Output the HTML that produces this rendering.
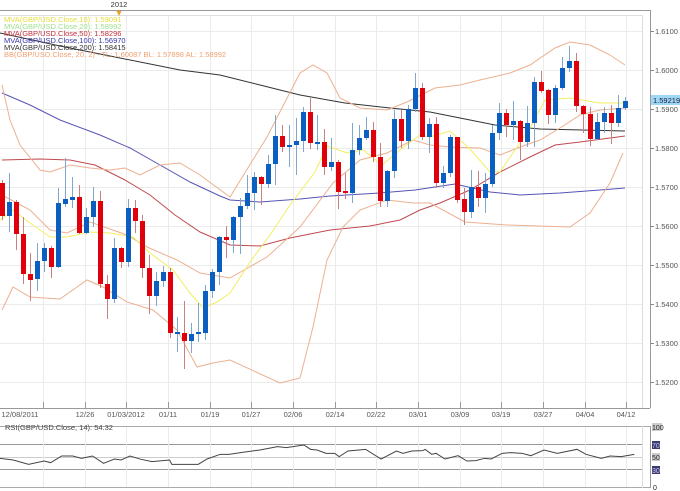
<!DOCTYPE html>
<html><head><meta charset="utf-8"><style>
html,body{margin:0;padding:0;background:#fff;width:680px;height:491px;overflow:hidden}
svg{display:block;font-family:"Liberation Sans",sans-serif}
.g{stroke:#ebebeb;stroke-width:1}
.b line{stroke:#7fa6cc;stroke-width:1}
.b rect{fill:#0b5fc0}
.r line{stroke:#c98080;stroke-width:1}
.r rect{fill:#e0000c}
.ax{font-size:7.5px;fill:#555}
</style></head><body>
<svg width="680" height="491" viewBox="0 0 680 491">
<!-- top bar -->
<text x="119" y="7" font-size="7.5" fill="#333" text-anchor="middle">2012</text>
<line x1="0" y1="10.5" x2="650" y2="10.5" stroke="#999"/>
<line x1="0" y1="15.5" x2="642" y2="15.5" stroke="#ddd"/>
<polygon points="116.5,11 121.5,11 119,16" fill="#f0a020"/>
<!-- grid -->
<g class="g">
<line x1="0" x2="642" y1="31.5" y2="31.5"/><line x1="0" x2="642" y1="70.5" y2="70.5"/><line x1="0" x2="642" y1="109.5" y2="109.5"/><line x1="0" x2="642" y1="148.5" y2="148.5"/><line x1="0" x2="642" y1="187.5" y2="187.5"/><line x1="0" x2="642" y1="226.5" y2="226.5"/><line x1="0" x2="642" y1="265.5" y2="265.5"/><line x1="0" x2="642" y1="304.5" y2="304.5"/><line x1="0" x2="642" y1="343.5" y2="343.5"/><line x1="0" x2="642" y1="382.5" y2="382.5"/>
<line y1="16" y2="408" x1="43.5" x2="43.5"/><line y1="16" y2="408" x1="85.5" x2="85.5"/><line y1="16" y2="408" x1="126.5" x2="126.5"/><line y1="16" y2="408" x1="168.5" x2="168.5"/><line y1="16" y2="408" x1="210.5" x2="210.5"/><line y1="16" y2="408" x1="251.5" x2="251.5"/><line y1="16" y2="408" x1="293.5" x2="293.5"/><line y1="16" y2="408" x1="335.5" x2="335.5"/><line y1="16" y2="408" x1="376.5" x2="376.5"/><line y1="16" y2="408" x1="418.5" x2="418.5"/><line y1="16" y2="408" x1="460.5" x2="460.5"/><line y1="16" y2="408" x1="501.5" x2="501.5"/><line y1="16" y2="408" x1="543.5" x2="543.5"/><line y1="16" y2="408" x1="585.5" x2="585.5"/><line y1="16" y2="408" x1="626.5" x2="626.5"/>
</g>
<line x1="642.5" y1="15" x2="642.5" y2="408" stroke="#ddd"/>
<line x1="650.5" y1="10" x2="650.5" y2="408" stroke="#999"/>
<line x1="0" y1="408.5" x2="650" y2="408.5" stroke="#999"/>
<!-- right axis ticks -->
<g stroke="#888">
<line x1="650" x2="654" y1="31.5" y2="31.5"/><line x1="650" x2="654" y1="70.5" y2="70.5"/><line x1="650" x2="654" y1="109.5" y2="109.5"/><line x1="650" x2="654" y1="148.5" y2="148.5"/><line x1="650" x2="654" y1="187.5" y2="187.5"/><line x1="650" x2="654" y1="226.5" y2="226.5"/><line x1="650" x2="654" y1="265.5" y2="265.5"/><line x1="650" x2="654" y1="304.5" y2="304.5"/><line x1="650" x2="654" y1="343.5" y2="343.5"/><line x1="650" x2="654" y1="382.5" y2="382.5"/>
</g>
<g class="ax">
<text x="655" y="34">1.6100</text><text x="655" y="73">1.6000</text><text x="655" y="112">1.5900</text><text x="655" y="151">1.5800</text><text x="655" y="190">1.5700</text><text x="655" y="229">1.5600</text><text x="655" y="268">1.5500</text><text x="655" y="307">1.5400</text><text x="655" y="346">1.5300</text><text x="655" y="385">1.5200</text>
</g>
<rect x="651" y="95" width="29" height="10" fill="#9fd8f4"/>
<text x="653" y="103" font-size="7.5" fill="#224">1.59219</text>
<!-- bottom axis ticks -->
<g stroke="#999">
<line x1="43.5" x2="43.5" y1="402" y2="408"/><line x1="85.5" x2="85.5" y1="402" y2="408"/><line x1="126.5" x2="126.5" y1="402" y2="408"/><line x1="168.5" x2="168.5" y1="402" y2="408"/><line x1="210.5" x2="210.5" y1="402" y2="408"/><line x1="251.5" x2="251.5" y1="402" y2="408"/><line x1="293.5" x2="293.5" y1="402" y2="408"/><line x1="335.5" x2="335.5" y1="402" y2="408"/><line x1="376.5" x2="376.5" y1="402" y2="408"/><line x1="418.5" x2="418.5" y1="402" y2="408"/><line x1="460.5" x2="460.5" y1="402" y2="408"/><line x1="501.5" x2="501.5" y1="402" y2="408"/><line x1="543.5" x2="543.5" y1="402" y2="408"/><line x1="585.5" x2="585.5" y1="402" y2="408"/><line x1="626.5" x2="626.5" y1="402" y2="408"/>
</g>
<g class="ax" text-anchor="middle">
<text x="20" y="417">12/08/2011</text><text x="85" y="417">12/26</text><text x="126" y="417">01/03/2012</text><text x="168" y="417">01/11</text><text x="210" y="417">01/19</text><text x="251" y="417">01/27</text><text x="293" y="417">02/06</text><text x="335" y="417">02/14</text><text x="376" y="417">02/22</text><text x="418" y="417">03/01</text><text x="460" y="417">03/09</text><text x="501" y="417">03/19</text><text x="543" y="417">03/27</text><text x="585" y="417">04/04</text><text x="626" y="417">04/12</text>
</g>
<!-- indicator lines -->
<g fill="none" stroke-width="1">
<polyline stroke="#333" points="0,33 60,46 120,58 180,70 220,75 260,85 300,95 345,103 390,108 430,112 495,125 540,129 625,131"/>
<polyline stroke="#5555b5" points="2,93 30,105 60,120 100,135 130,148 160,165 190,182 220,196 230,200 260,202 300,199 330,196 380,193 415,190 455,184 490,192 520,195 560,193 600,190 625,188"/>
<polyline stroke="#c04a50" points="2,160 40,159 70,160 95,165 125,180 150,195 175,215 200,232 230,245 260,246 290,238 330,230 370,226 400,220 420,210 440,203 470,190 500,172 530,157 555,145 580,142 625,136"/>
<polyline stroke="#ecb090" points="2,85 10,120 20,145 40,170 50,172 70,165 90,168 110,170 125,168 140,175 160,165 180,163 200,175 230,197 267,137 300,73 313,65 327,73 340,98 360,108 387,110 407,102 435,88 460,85 480,80 510,73 530,65 555,48 570,42 590,45 610,55 625,65"/>
<polyline stroke="#ecb090" points="2,195 30,210 50,230 67,233 90,222 127,235 147,247 177,260 200,273 230,278 267,257 300,227 333,183 360,160 387,153 413,140 430,145 450,147 480,148 500,155 520,147 540,140 560,128 580,115 600,110 625,108"/>
<polyline stroke="#ecb090" points="2,310 13,287 30,297 60,299 87,280 103,287 127,302 153,310 177,330 197,367 213,363 230,360 280,383 300,378 313,327 327,260 343,227 360,210 387,200 413,203 430,203 465,222 507,225 570,227 590,213 610,183 623,153"/>
<polyline stroke="#f2ee60" points="0,220 13,210 30,223 50,237 67,237 90,232 110,233 133,237 150,253 173,270 190,293 203,308 217,302 230,293 250,262 270,235 290,205 315,172 327,146 347,153 363,150 382,165 400,150 420,135 430,137 450,131 470,149 490,172 500,172 515,150 530,128 545,100 570,98 600,103 625,103"/>
</g>
<!-- candles -->
<g id="c">
<g class="r"><line x1="2.5" x2="2.5" y1="180" y2="220"/><rect x="0" y="183" width="5" height="33"/></g>
<g class="b"><line x1="9.5" x2="9.5" y1="173" y2="232"/><rect x="7" y="202" width="5" height="14"/></g>
<g class="r"><line x1="16.5" x2="16.5" y1="200" y2="250"/><rect x="14" y="202" width="5" height="32"/></g>
<g class="r"><line x1="23.5" x2="23.5" y1="217" y2="284"/><rect x="21" y="234" width="5" height="40"/></g>
<g class="r"><line x1="30.5" x2="30.5" y1="253" y2="301"/><rect x="28" y="274" width="5" height="6"/></g>
<g class="b"><line x1="37.5" x2="37.5" y1="243" y2="291"/><rect x="35" y="261" width="5" height="18"/></g>
<g class="b"><line x1="44.5" x2="44.5" y1="243" y2="272"/><rect x="42" y="248" width="5" height="13"/></g>
<g class="r"><line x1="51.5" x2="51.5" y1="246" y2="278"/><rect x="49" y="248" width="5" height="19"/></g>
<g class="b"><line x1="58.5" x2="58.5" y1="188" y2="268"/><rect x="56" y="203" width="5" height="64"/></g>
<g class="b"><line x1="65.5" x2="65.5" y1="158" y2="207"/><rect x="63" y="199" width="5" height="5"/></g>
<g class="b"><line x1="72.5" x2="72.5" y1="177" y2="208"/><rect x="70" y="197" width="5" height="3"/></g>
<g class="r"><line x1="79.5" x2="79.5" y1="185" y2="234"/><rect x="77" y="197" width="5" height="36"/></g>
<g class="b"><line x1="86.5" x2="86.5" y1="208" y2="234"/><rect x="84" y="217" width="5" height="16"/></g>
<g class="b"><line x1="93.5" x2="93.5" y1="187" y2="227"/><rect x="91" y="201" width="5" height="16"/></g>
<g class="r"><line x1="100.5" x2="100.5" y1="191" y2="288"/><rect x="98" y="201" width="5" height="83"/></g>
<g class="r"><line x1="107.5" x2="107.5" y1="275" y2="319"/><rect x="105" y="284" width="5" height="15"/></g>
<g class="b"><line x1="114.5" x2="114.5" y1="238" y2="303"/><rect x="112" y="248" width="5" height="51"/></g>
<g class="r"><line x1="121.5" x2="121.5" y1="247" y2="268"/><rect x="119" y="248" width="5" height="14"/></g>
<g class="b"><line x1="128.5" x2="128.5" y1="199" y2="267"/><rect x="126" y="208" width="5" height="54"/></g>
<g class="r"><line x1="135.5" x2="135.5" y1="200" y2="233"/><rect x="133" y="208" width="5" height="13"/></g>
<g class="r"><line x1="142.5" x2="142.5" y1="215" y2="278"/><rect x="140" y="221" width="5" height="47"/></g>
<g class="r"><line x1="149.5" x2="149.5" y1="255" y2="314"/><rect x="147" y="268" width="5" height="28"/></g>
<g class="b"><line x1="156.5" x2="156.5" y1="272" y2="306"/><rect x="154" y="281" width="5" height="15"/></g>
<g class="b"><line x1="163.5" x2="163.5" y1="266" y2="287"/><rect x="161" y="272" width="5" height="9"/></g>
<g class="r"><line x1="170.5" x2="170.5" y1="268" y2="338"/><rect x="168" y="272" width="5" height="61"/></g>
<g class="b"><line x1="177.5" x2="177.5" y1="317" y2="352"/><rect x="175" y="332" width="5" height="2"/></g>
<g class="r"><line x1="184.5" x2="184.5" y1="301" y2="369"/><rect x="182" y="333" width="5" height="8"/></g>
<g class="b"><line x1="191.5" x2="191.5" y1="323" y2="353"/><rect x="189" y="334" width="5" height="7"/></g>
<g class="b"><line x1="198.5" x2="198.5" y1="303" y2="342"/><rect x="196" y="332" width="5" height="2"/></g>
<g class="b"><line x1="205.5" x2="205.5" y1="285" y2="340"/><rect x="203" y="291" width="5" height="42"/></g>
<g class="b"><line x1="212.5" x2="212.5" y1="269" y2="298"/><rect x="210" y="272" width="5" height="19"/></g>
<g class="b"><line x1="219.5" x2="219.5" y1="236" y2="285"/><rect x="217" y="237" width="5" height="35"/></g>
<g class="r"><line x1="226.5" x2="226.5" y1="226" y2="258"/><rect x="224" y="237" width="5" height="3"/></g>
<g class="b"><line x1="233.5" x2="233.5" y1="216" y2="253"/><rect x="231" y="217" width="5" height="23"/></g>
<g class="b"><line x1="240.5" x2="240.5" y1="198" y2="254"/><rect x="238" y="206" width="5" height="11"/></g>
<g class="b"><line x1="247.5" x2="247.5" y1="175" y2="209"/><rect x="245" y="193" width="5" height="13"/></g>
<g class="b"><line x1="254.5" x2="254.5" y1="172" y2="210"/><rect x="252" y="177" width="5" height="16"/></g>
<g class="r"><line x1="261.5" x2="261.5" y1="176" y2="205"/><rect x="259" y="177" width="5" height="7"/></g>
<g class="b"><line x1="268.5" x2="268.5" y1="155" y2="188"/><rect x="266" y="164" width="5" height="20"/></g>
<g class="b"><line x1="275.5" x2="275.5" y1="115" y2="185"/><rect x="273" y="136" width="5" height="28"/></g>
<g class="r"><line x1="282.5" x2="282.5" y1="125" y2="152"/><rect x="280" y="136" width="5" height="11"/></g>
<g class="b"><line x1="289.5" x2="289.5" y1="125" y2="167"/><rect x="287" y="145" width="5" height="2"/></g>
<g class="b"><line x1="296.5" x2="296.5" y1="118" y2="175"/><rect x="294" y="141" width="5" height="4"/></g>
<g class="b"><line x1="303.5" x2="303.5" y1="107" y2="152"/><rect x="301" y="112" width="5" height="29"/></g>
<g class="r"><line x1="310.5" x2="310.5" y1="98" y2="149"/><rect x="308" y="112" width="5" height="31"/></g>
<g class="b"><line x1="317.5" x2="317.5" y1="115" y2="150"/><rect x="315" y="142" width="5" height="2"/></g>
<g class="r"><line x1="324.5" x2="324.5" y1="129" y2="175"/><rect x="322" y="142" width="5" height="25"/></g>
<g class="b"><line x1="331.5" x2="331.5" y1="138" y2="171"/><rect x="329" y="162" width="5" height="5"/></g>
<g class="r"><line x1="338.5" x2="338.5" y1="160" y2="209"/><rect x="336" y="162" width="5" height="30"/></g>
<g class="r"><line x1="345.5" x2="345.5" y1="173" y2="199"/><rect x="343" y="191" width="5" height="2"/></g>
<g class="b"><line x1="352.5" x2="352.5" y1="123" y2="203"/><rect x="350" y="150" width="5" height="43"/></g>
<g class="b"><line x1="359.5" x2="359.5" y1="125" y2="155"/><rect x="357" y="138" width="5" height="12"/></g>
<g class="b"><line x1="366.5" x2="366.5" y1="117" y2="140"/><rect x="364" y="130" width="5" height="8"/></g>
<g class="r"><line x1="373.5" x2="373.5" y1="122" y2="162"/><rect x="371" y="130" width="5" height="27"/></g>
<g class="r"><line x1="380.5" x2="380.5" y1="143" y2="207"/><rect x="378" y="157" width="5" height="44"/></g>
<g class="b"><line x1="387.5" x2="387.5" y1="170" y2="207"/><rect x="385" y="171" width="5" height="30"/></g>
<g class="b"><line x1="394.5" x2="394.5" y1="110" y2="178"/><rect x="392" y="119" width="5" height="52"/></g>
<g class="r"><line x1="401.5" x2="401.5" y1="110" y2="148"/><rect x="399" y="119" width="5" height="22"/></g>
<g class="b"><line x1="408.5" x2="408.5" y1="105" y2="149"/><rect x="406" y="109" width="5" height="32"/></g>
<g class="b"><line x1="415.5" x2="415.5" y1="73" y2="112"/><rect x="413" y="88" width="5" height="21"/></g>
<g class="r"><line x1="422.5" x2="422.5" y1="83" y2="140"/><rect x="420" y="88" width="5" height="49"/></g>
<g class="b"><line x1="429.5" x2="429.5" y1="118" y2="153"/><rect x="427" y="124" width="5" height="13"/></g>
<g class="r"><line x1="436.5" x2="436.5" y1="117" y2="188"/><rect x="434" y="124" width="5" height="59"/></g>
<g class="b"><line x1="443.5" x2="443.5" y1="166" y2="188"/><rect x="441" y="173" width="5" height="10"/></g>
<g class="b"><line x1="450.5" x2="450.5" y1="135" y2="177"/><rect x="448" y="137" width="5" height="36"/></g>
<g class="r"><line x1="457.5" x2="457.5" y1="137" y2="203"/><rect x="455" y="137" width="5" height="63"/></g>
<g class="r"><line x1="464.5" x2="464.5" y1="188" y2="225"/><rect x="462" y="199" width="5" height="13"/></g>
<g class="b"><line x1="471.5" x2="471.5" y1="170" y2="218"/><rect x="469" y="187" width="5" height="25"/></g>
<g class="r"><line x1="478.5" x2="478.5" y1="171" y2="207"/><rect x="476" y="187" width="5" height="11"/></g>
<g class="b"><line x1="485.5" x2="485.5" y1="173" y2="213"/><rect x="483" y="184" width="5" height="14"/></g>
<g class="b"><line x1="492.5" x2="492.5" y1="125" y2="187"/><rect x="490" y="133" width="5" height="51"/></g>
<g class="b"><line x1="499.5" x2="499.5" y1="103" y2="140"/><rect x="497" y="113" width="5" height="20"/></g>
<g class="r"><line x1="506.5" x2="506.5" y1="109" y2="137"/><rect x="504" y="113" width="5" height="12"/></g>
<g class="b"><line x1="513.5" x2="513.5" y1="101" y2="140"/><rect x="511" y="121" width="5" height="4"/></g>
<g class="r"><line x1="520.5" x2="520.5" y1="120" y2="160"/><rect x="518" y="121" width="5" height="21"/></g>
<g class="b"><line x1="527.5" x2="527.5" y1="106" y2="147"/><rect x="525" y="123" width="5" height="19"/></g>
<g class="b"><line x1="534.5" x2="534.5" y1="77" y2="147"/><rect x="532" y="82" width="5" height="41"/></g>
<g class="r"><line x1="541.5" x2="541.5" y1="71" y2="93"/><rect x="539" y="82" width="5" height="9"/></g>
<g class="r"><line x1="548.5" x2="548.5" y1="89" y2="124"/><rect x="546" y="90" width="5" height="25"/></g>
<g class="b"><line x1="555.5" x2="555.5" y1="85" y2="123"/><rect x="553" y="88" width="5" height="27"/></g>
<g class="b"><line x1="562.5" x2="562.5" y1="57" y2="90"/><rect x="560" y="68" width="5" height="20"/></g>
<g class="b"><line x1="569.5" x2="569.5" y1="46" y2="72"/><rect x="567" y="61" width="5" height="7"/></g>
<g class="r"><line x1="576.5" x2="576.5" y1="53" y2="112"/><rect x="574" y="61" width="5" height="45"/></g>
<g class="r"><line x1="583.5" x2="583.5" y1="105" y2="133"/><rect x="581" y="106" width="5" height="8"/></g>
<g class="r"><line x1="590.5" x2="590.5" y1="107" y2="146"/><rect x="588" y="114" width="5" height="25"/></g>
<g class="b"><line x1="597.5" x2="597.5" y1="113" y2="140"/><rect x="595" y="122" width="5" height="17"/></g>
<g class="b"><line x1="604.5" x2="604.5" y1="107" y2="133"/><rect x="602" y="113" width="5" height="9"/></g>
<g class="r"><line x1="611.5" x2="611.5" y1="105" y2="144"/><rect x="609" y="113" width="5" height="10"/></g>
<g class="b"><line x1="618.5" x2="618.5" y1="95" y2="127"/><rect x="616" y="108" width="5" height="15"/></g>
<g class="b"><line x1="625.5" x2="625.5" y1="97" y2="110"/><rect x="623" y="101" width="5" height="7"/></g>
</g>
<!-- legend -->
<g font-size="7.5">
<text x="4" y="22" fill="#e6dc3a">MVA(GBP/USD.Close,10): 1.59091</text>
<text x="4" y="29" fill="#9ee08c">MVA(GBP/USD.Close,20): 1.58992</text>
<text x="4" y="36" fill="#c0303a">MVA(GBP/USD.Close,50): 1.58296</text>
<text x="4" y="43" fill="#3535a8">MVA(GBP/USD.Close,100): 1.56970</text>
<text x="4" y="50" fill="#333">MVA(GBP/USD.Close,200): 1.58415</text>
<text x="4" y="57" fill="#f0a070">BB(GBP/USD.Close, 20, 2) -  TL: 1.60087  BL: 1.57898  AL: 1.58992</text>
</g>
<!-- RSI panel -->
<line x1="0" y1="426.5" x2="650" y2="426.5" stroke="#aaa"/>
<line x1="0" y1="444.5" x2="642" y2="444.5" stroke="#999"/>
<line x1="0" y1="457.5" x2="642" y2="457.5" stroke="#ccc"/>
<line x1="0" y1="469.5" x2="642" y2="469.5" stroke="#999"/>
<line x1="0" y1="487.5" x2="650" y2="487.5" stroke="#aaa"/>
<g class="g"><line y1="427" y2="487" x1="43.5" x2="43.5"/><line y1="427" y2="487" x1="85.5" x2="85.5"/><line y1="427" y2="487" x1="126.5" x2="126.5"/><line y1="427" y2="487" x1="168.5" x2="168.5"/><line y1="427" y2="487" x1="210.5" x2="210.5"/><line y1="427" y2="487" x1="251.5" x2="251.5"/><line y1="427" y2="487" x1="293.5" x2="293.5"/><line y1="427" y2="487" x1="335.5" x2="335.5"/><line y1="427" y2="487" x1="376.5" x2="376.5"/><line y1="427" y2="487" x1="418.5" x2="418.5"/><line y1="427" y2="487" x1="460.5" x2="460.5"/><line y1="427" y2="487" x1="501.5" x2="501.5"/><line y1="427" y2="487" x1="543.5" x2="543.5"/><line y1="427" y2="487" x1="585.5" x2="585.5"/><line y1="427" y2="487" x1="626.5" x2="626.5"/></g>
<line x1="642.5" y1="426" x2="642.5" y2="488" stroke="#ddd"/>
<line x1="650.5" y1="426" x2="650.5" y2="488" stroke="#999"/>
<text x="5" y="430" font-size="7.5" fill="#444">RSI(GBP/USD.Close, 14): 54.32</text>
<g transform="translate(0,395) scale(0.4405,0.3333)">
<polyline fill="none" stroke="#444" vector-effect="non-scaling-stroke" stroke-width="1" points="0,190 30,195 65,208 100,198 115,203 140,183 165,183 185,190 210,183 235,205 260,192 275,195 295,183 320,193 345,200 385,195 390,208 450,208 470,192 500,178 520,178 550,172 590,165 630,155 650,158 690,150 705,163 720,165 740,175 760,175 770,185 790,168 830,163 865,192 900,168 915,175 935,168 960,167 965,163 980,178 990,175 1010,192 1040,182 1060,198 1080,197 1100,190 1115,192 1140,175 1160,173 1185,175 1205,182 1235,165 1265,175 1310,163 1330,178 1365,190 1385,183 1410,185 1440,178"/>
</g>
<g font-size="7" fill="#222">
<rect x="652" y="423" width="10" height="8" fill="#ccc"/><text x="652" y="430">100</text>
<rect x="652" y="441" width="8" height="8" fill="#3b3b7a"/><text x="652" y="448" fill="#ccd">70</text>
<rect x="652" y="453" width="8" height="8" fill="#ccc"/><text x="652" y="460">50</text>
<rect x="652" y="466" width="8" height="8" fill="#3b3b7a"/><text x="652" y="473" fill="#ccd">30</text>
<text x="653" y="490">0</text>
</g>
</svg>
</body></html>
